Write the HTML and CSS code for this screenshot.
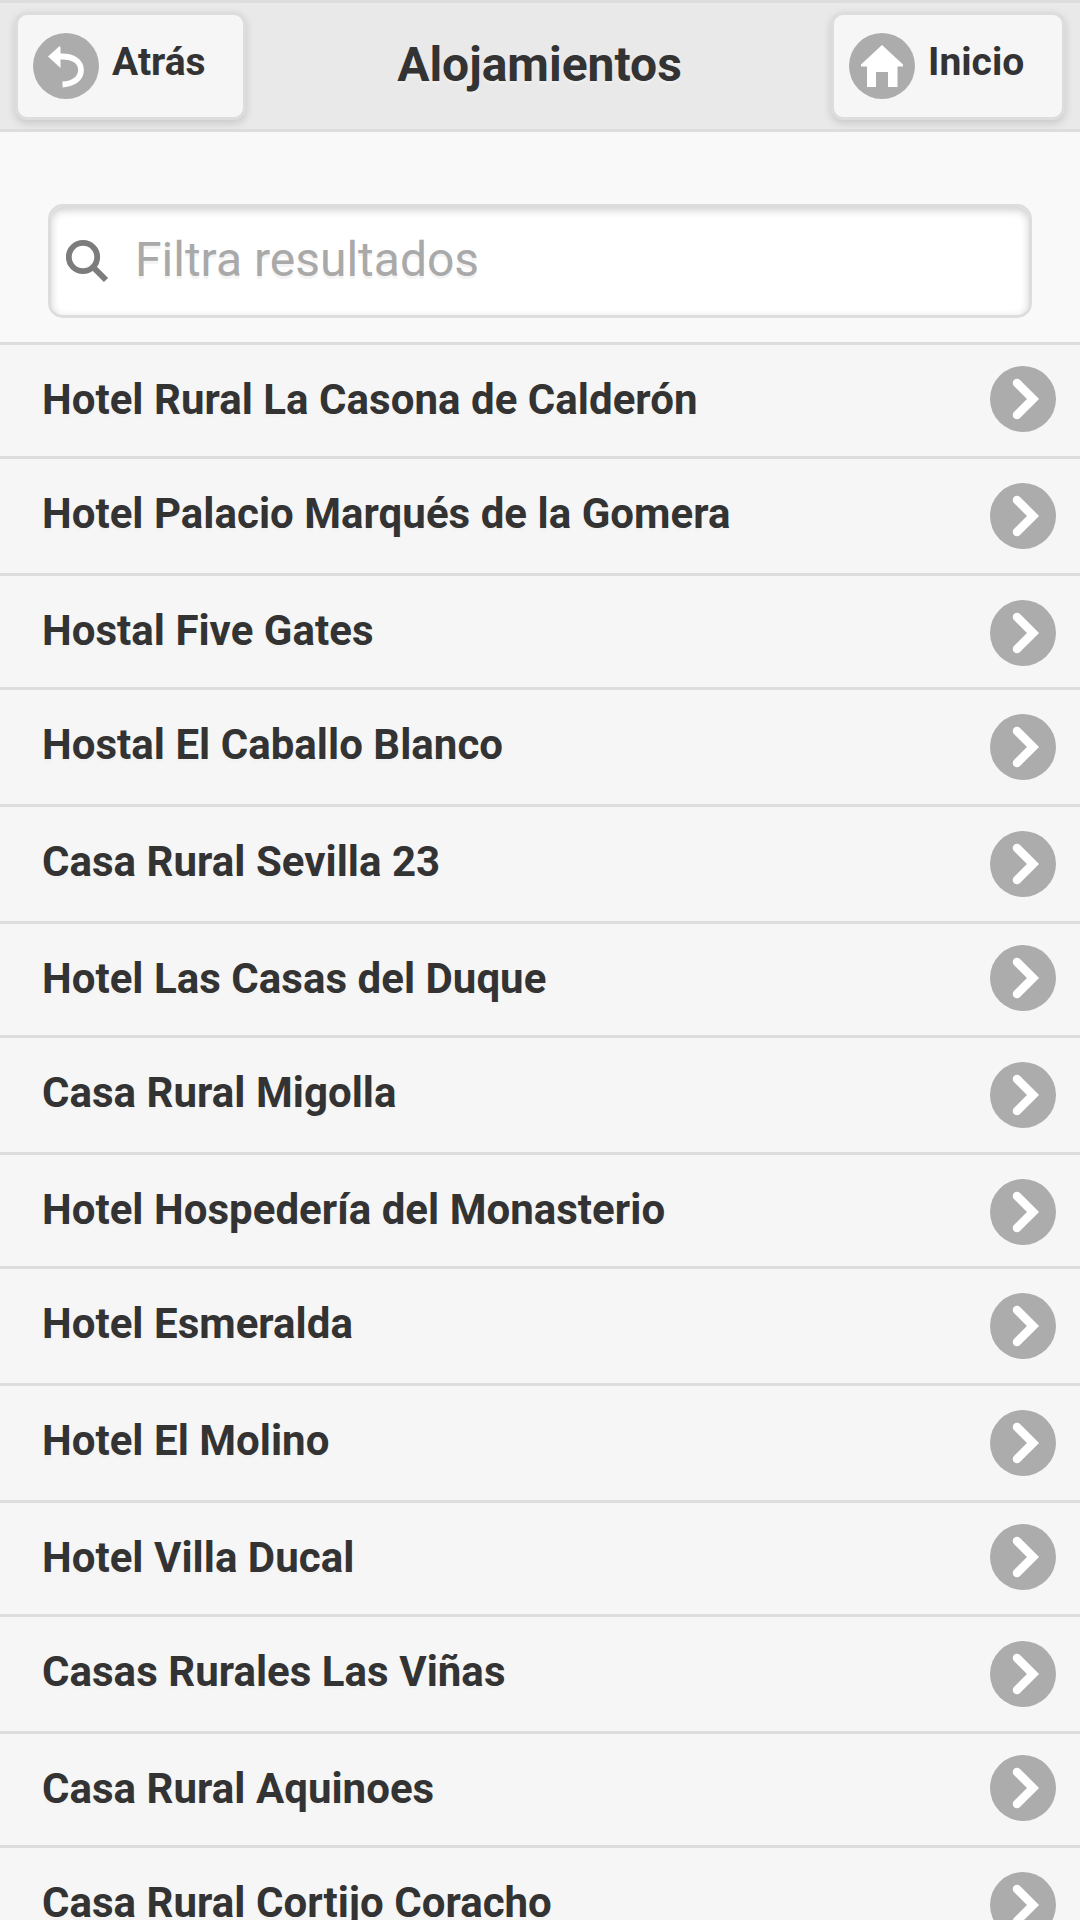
FILE: index.html
```html
<!DOCTYPE html>
<html lang="es">
<head>
<meta charset="utf-8">
<title>Alojamientos</title>
<link rel="stylesheet" href="styles.css">
</head>
<body>
<svg class="defs" aria-hidden="true">
  <symbol id="chevron" viewBox="0 0 66 66"><path class="glyph" d="M27 17 43 33 27 49" fill="none" stroke="#fff" stroke-width="8.500" stroke-linecap="round"/></symbol>
</svg>
<header class="header">
  <a class="button">
    <svg class="disc" viewBox="0 0 66 66"><g class="glyph"><path d="M26 23.500H29C41 23.500 48 29 48 37C48 45 41 51 29.500 51.500" fill="none" stroke="#fff" stroke-width="5.800"/><path d="M15 23.500 25 14.500Q27.500 12 27.500 15V35Z" fill="#fff"/></g></svg>
    <span>Atrás</span>
  </a>
  <h1 class="title">Alojamientos</h1>
  <a class="button">
    <svg class="disc" viewBox="0 0 66 66"><path class="glyph" d="M33 12 54 31.500V33.500H48.500V54H39V39H27V54H18V33.500H12V31.500Z" fill="#fff"/></svg>
    <span>Inicio</span>
  </a>
</header>
<main>
  <form class="filter">
    <label class="search">
      <svg class="lens" viewBox="0 0 42 42" fill="none" stroke="#7c7c7c"><g class="glyph"><circle cx="17" cy="17" r="14.200" stroke-width="5.800"/><path d="M27 27 40 40" stroke-width="6"/></g></svg>
      <input class="search-input" type="text" placeholder="Filtra resultados">
    </label>
  </form>
  <ul class="list">
    <li class="row row--short row--raised"><span>Hotel Rural La Casona de Calderón</span><svg class="disc"><use href="#chevron"/></svg></li>
    <li class="row"><span>Hotel Palacio Marqués de la Gomera</span><svg class="disc"><use href="#chevron"/></svg></li>
    <li class="row row--short"><span>Hostal Five Gates</span><svg class="disc"><use href="#chevron"/></svg></li>
    <li class="row"><span>Hostal El Caballo Blanco</span><svg class="disc"><use href="#chevron"/></svg></li>
    <li class="row"><span>Casa Rural Sevilla 23</span><svg class="disc"><use href="#chevron"/></svg></li>
    <li class="row row--short row--raised"><span>Hotel Las Casas del Duque</span><svg class="disc"><use href="#chevron"/></svg></li>
    <li class="row"><span>Casa Rural Migolla</span><svg class="disc"><use href="#chevron"/></svg></li>
    <li class="row row--short"><span>Hotel Hospedería del Monasterio</span><svg class="disc"><use href="#chevron"/></svg></li>
    <li class="row"><span>Hotel Esmeralda</span><svg class="disc"><use href="#chevron"/></svg></li>
    <li class="row"><span>Hotel El Molino</span><svg class="disc"><use href="#chevron"/></svg></li>
    <li class="row row--short row--raised"><span>Hotel Villa Ducal</span><svg class="disc"><use href="#chevron"/></svg></li>
    <li class="row"><span>Casas Rurales Las Viñas</span><svg class="disc"><use href="#chevron"/></svg></li>
    <li class="row row--short row--raised"><span>Casa Rural Aquinoes</span><svg class="disc"><use href="#chevron"/></svg></li>
    <li class="row"><span>Casa Rural Cortijo Coracho</span><svg class="disc"><use href="#chevron"/></svg></li>
  </ul>
</main>
</body>
</html>
```
FILE: styles.css
```css
* { box-sizing: border-box; }

body {
  margin: 0;
  height: 1920px;
  overflow: hidden;
  background: #f9f9f9;
  color: #333;
  font-family: Roboto, sans-serif;
}

.defs {
  display: block;
  width: 0;
  height: 0;
}

.header {
  display: grid;
  grid-template-columns: 231px 1fr 234px;
  align-items: start;
  height: 132px;
  padding: 9px 15px 0;
  border: solid #ddd;
  border-width: 3px 0;
  background: #e9e9e9;
}

.title {
  margin: 0;
  padding: 25px 0 0 2px;
  font-size: 48px;
  line-height: 56px;
  text-align: center;
  text-shadow: 0 3px 0 #eee;
}

.button {
  display: flex;
  gap: 13px;
  height: 108px;
  padding: 18px 15px;
  border: 3px solid #ddd;
  border-radius: 12px;
  background: #f6f6f6;
  box-shadow: 0 3px 9px rgba(0, 0, 0, .15);
  font-size: 39px;
  font-weight: 700;
  line-height: 58px;
  text-shadow: 0 3px 0 #f3f3f3;
}

.disc {
  flex: none;
  width: 66px;
  height: 66px;
  border-radius: 50%;
  background: #acacac;
}

/* Softened like the scaled-up icon sprite. */
.glyph { filter: blur(.7px); }

.filter {
  height: 210px;
  margin: 0;
  padding: 72px 48px 0;
}

.search {
  display: flex;
  align-items: center;
  gap: 27px;
  height: 114px;
  padding: 0 15px;
  border: 3px solid #ddd;
  border-radius: 15px;
  background: #fff;
  box-shadow: inset 0 3px 9px rgba(0, 0, 0, .2);
}

.lens {
  flex: none;
  width: 42px;
  height: 42px;
}

.search-input {
  flex: 1;
  min-width: 0;
  height: 72px;
  padding: 0 0 3px;
  border: 0;
  outline: 0;
  background: none;
  font: 48px Roboto, sans-serif;
  text-shadow: 0 3px 0 #f3f3f3;
}

.search-input::placeholder { color: #a9a9a9; }

.list {
  margin: 0;
  padding: 0;
  list-style: none;
}

.row {
  display: flex;
  justify-content: space-between;
  height: 117px;
  padding: 24px 24px 0 42px;
  border-top: 3px solid #ddd;
  background: #f6f6f6;
  font-size: 42px;
  font-weight: 700;
  letter-spacing: .03px;
  line-height: 62px;
  text-shadow: 0 3px 0 #f3f3f3;
}

.row--short { height: 114px; }

.row--raised .disc { margin-top: -3px; }
```
